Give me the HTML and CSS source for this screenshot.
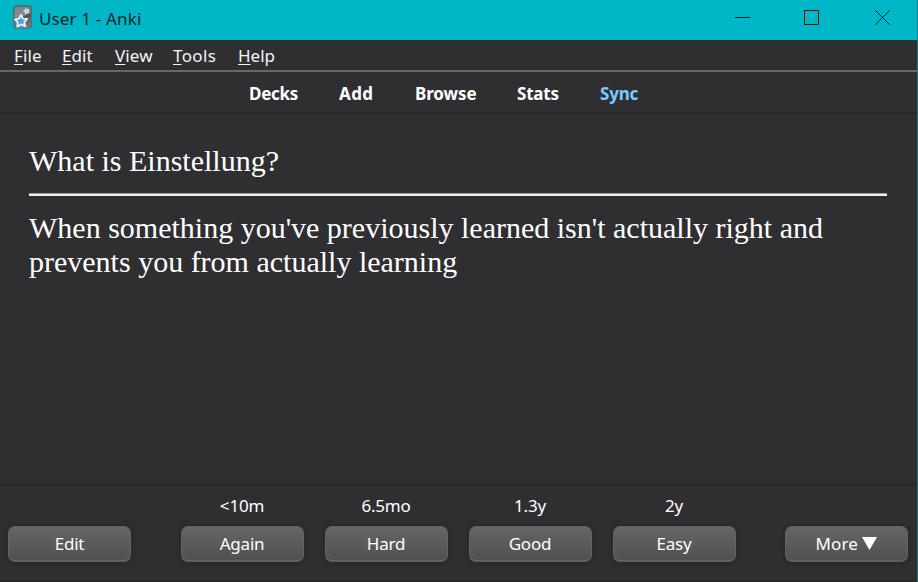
FILE: index.html
```html
<!DOCTYPE html>
<html lang="en">
<head>
<meta charset="utf-8">
<title>User 1 - Anki</title>
<link rel="stylesheet" href="styles.css">
</head>
<body>
<div class="window">
  <header class="titlebar">
    <svg class="app-icon" width="19" height="24" viewBox="0 0 19 24">
      <defs>
        <linearGradient id="card" x1="0" y1="0" x2="0" y2="1"><stop offset="0" stop-color="#7b8080"/><stop offset="1" stop-color="#a0a4a4"/></linearGradient>
        <linearGradient id="shade" x1="0" y1="0" x2="0" y2="1"><stop offset="0" stop-color="#454849"/><stop offset="1" stop-color="#777b7c"/></linearGradient>
      </defs>
      <rect x=".8" y=".8" width="17.4" height="22.2" rx="3" fill="url(#card)" stroke="#4b6468" stroke-width="1.2"/>
      <path d="M1.5 12Q9 13 17.5 8V20q0 2.300-2.300 2.300H3.800Q1.500 22.300 1.500 20Z" fill="url(#shade)"/>
      <path d="M8 10l2 3.600 4.200.4-2.900 3.100 1 4.100-4.200-1.700-3.700 2.100.3-4.300-2.700-3 4.100-.8Z" fill="#4a9ee0" stroke="#e2f1fb" stroke-width="1.900" stroke-linejoin="round"/>
      <path d="M12.800 3.500l1.100 1.200 1.800-.3-.7 1.700.8 1.600-1.800-.2-1.300 1.300-.4-1.800-1.700-.9 1.700-.9Z" fill="#b5d8f1" stroke="#d2e5f0" stroke-linejoin="round"/>
    </svg>
    <h1 class="title">User 1 - Anki</h1>
    <div class="controls">
      <svg width="15" height="15" viewBox="0 0 15 15"><path d="M0 7.500h15"/></svg>
      <svg width="15" height="15" viewBox="0 0 15 15"><path d="M.5.5h14v14H.5z"/></svg>
      <svg width="15" height="15" viewBox="0 0 15 15"><path d="M.2.2l14.600 14.600M14.800.2L.2 14.800"/></svg>
    </div>
  </header>
  <nav class="menubar">
    <span class="m-file"><u>F</u>ile</span><span class="m-edit"><u>E</u>dit</span><span class="m-view"><u>V</u>iew</span><span class="m-tools"><u>T</u>ools</span><span class="m-help"><u>H</u>elp</span>
  </nav>
  <nav class="toolbar">
    <a class="t-decks">Decks</a><a class="t-add">Add</a><a class="t-browse">Browse</a><a class="t-stats">Stats</a><a class="sync">Sync</a>
  </nav>
  <main class="card">
    <p>What is Einstellung?</p>
    <hr>
    <p>When something you've previously learned isn't actually right and prevents you from actually learning</p>
  </main>
  <footer class="answers">
    <div class="choice"><button>Edit</button></div>
    <div class="grades">
      <div class="choice"><span>&lt;10m</span><button>Again</button></div>
      <div class="choice"><span>6.5mo</span><button>Hard</button></div>
      <div class="choice"><span>1.3y</span><button>Good</button></div>
      <div class="choice"><span>2y</span><button>Easy</button></div>
    </div>
    <div class="choice"><button class="more">More <svg width="15" height="13" viewBox="0 0 15 13"><path d="M0 0h15L7.500 13z"/></svg></button></div>
  </footer>
</div>
</body>
</html>
```
FILE: styles.css
```css
* { box-sizing: border-box; }
body {
  margin: 0;
  background: #2f2f31;
  color: #fff;
  font: 17px/24px "Noto Sans", sans-serif;
  letter-spacing: -0.2px;
}
.window {
  width: 918px;
  height: 582px;
  display: flex;
  flex-direction: column;
  border-right: 1px solid #128087;
  overflow: hidden;
}
.titlebar {
  height: 40px;
  margin-right: -1px;
  padding: 0 28px 0 13px;
  display: flex;
  align-items: center;
  flex: none;
  background: #00b7c7;
  color: #06262a;
}
.app-icon { margin: -6px 7px 0 0; }
.title { margin: -3px 0 0; font-size: 17px; font-weight: 400; letter-spacing: 0.15px; }
.controls {
  margin: -5px 0 0 auto;
  width: 155px;
  display: flex;
}
.controls svg { margin-right: 54px; flex: none; fill: none; stroke: #04181a; stroke-width: 1; }
.controls svg:nth-child(2) { margin-right: 56px; }
.controls svg:last-child { margin-right: 0; }
.menubar {
  height: 32px;
  flex: none;
  display: flex;
  padding: 4px 0 0 14px;
  border-bottom: 2px solid #666766;
  color: #f4f4f4;
}
.menubar u { text-underline-offset: 2px; text-decoration-thickness: 1px; }
.m-file { width: 48px; letter-spacing: 0.1px; }
.m-edit { width: 53px; letter-spacing: 0.1px; }
.m-view { width: 58px; letter-spacing: 0.1px; }
.m-tools { width: 65px; letter-spacing: 0.35px; }
.m-help { letter-spacing: 0; }
.toolbar {
  height: 42px;
  flex: none;
  display: flex;
  padding: 10px 0 0 249px;
  border-bottom: 2px solid #29292a;
  font-weight: 700;
}
.t-decks { width: 90px; letter-spacing: -0.3px; }
.t-add { width: 76px; letter-spacing: 0.4px; }
.t-browse { width: 102px; letter-spacing: -0.1px; }
.t-stats { width: 83px; }
.sync { color: #77ccff; }
.card {
  flex: 1;
  padding: 30px 30px 0 29px;
  font: 30px/34px "Liberation Serif", serif;
  letter-spacing: 0;
}
.card p { margin: 0; }
.card hr {
  height: 3px;
  margin: 15px 0;
  border: 0;
  border-top: 1px solid #9a9a9a;
  background: #eee;
}
.answers {
  height: 98px;
  flex: none;
  display: flex;
  justify-content: space-between;
  align-items: flex-start;
  padding: 9px 9px 0 8px;
  border-top: 2px solid #29292a;
  border-bottom: 2px solid #29292a;
}
.grades { display: flex; gap: 21px; }
.choice {
  width: 123px;
  height: 67px;
  display: flex;
  flex-direction: column;
  justify-content: flex-end;
  text-align: center;
}
.choice span { margin-bottom: 8px; }
.choice button {
  height: 36px;
  flex: none;
  padding: 1px 0 0;
  border: 1px solid #646464;
  border-bottom: 2px solid #606060;
  border-radius: 7px;
  background: linear-gradient(#656565, #515151);
  box-shadow: 0 0 4px #222;
  color: #fff;
  font: inherit;
  letter-spacing: inherit;
}
.choice .more { letter-spacing: 0.1px; }
.choice svg { fill: #fff; }
```
